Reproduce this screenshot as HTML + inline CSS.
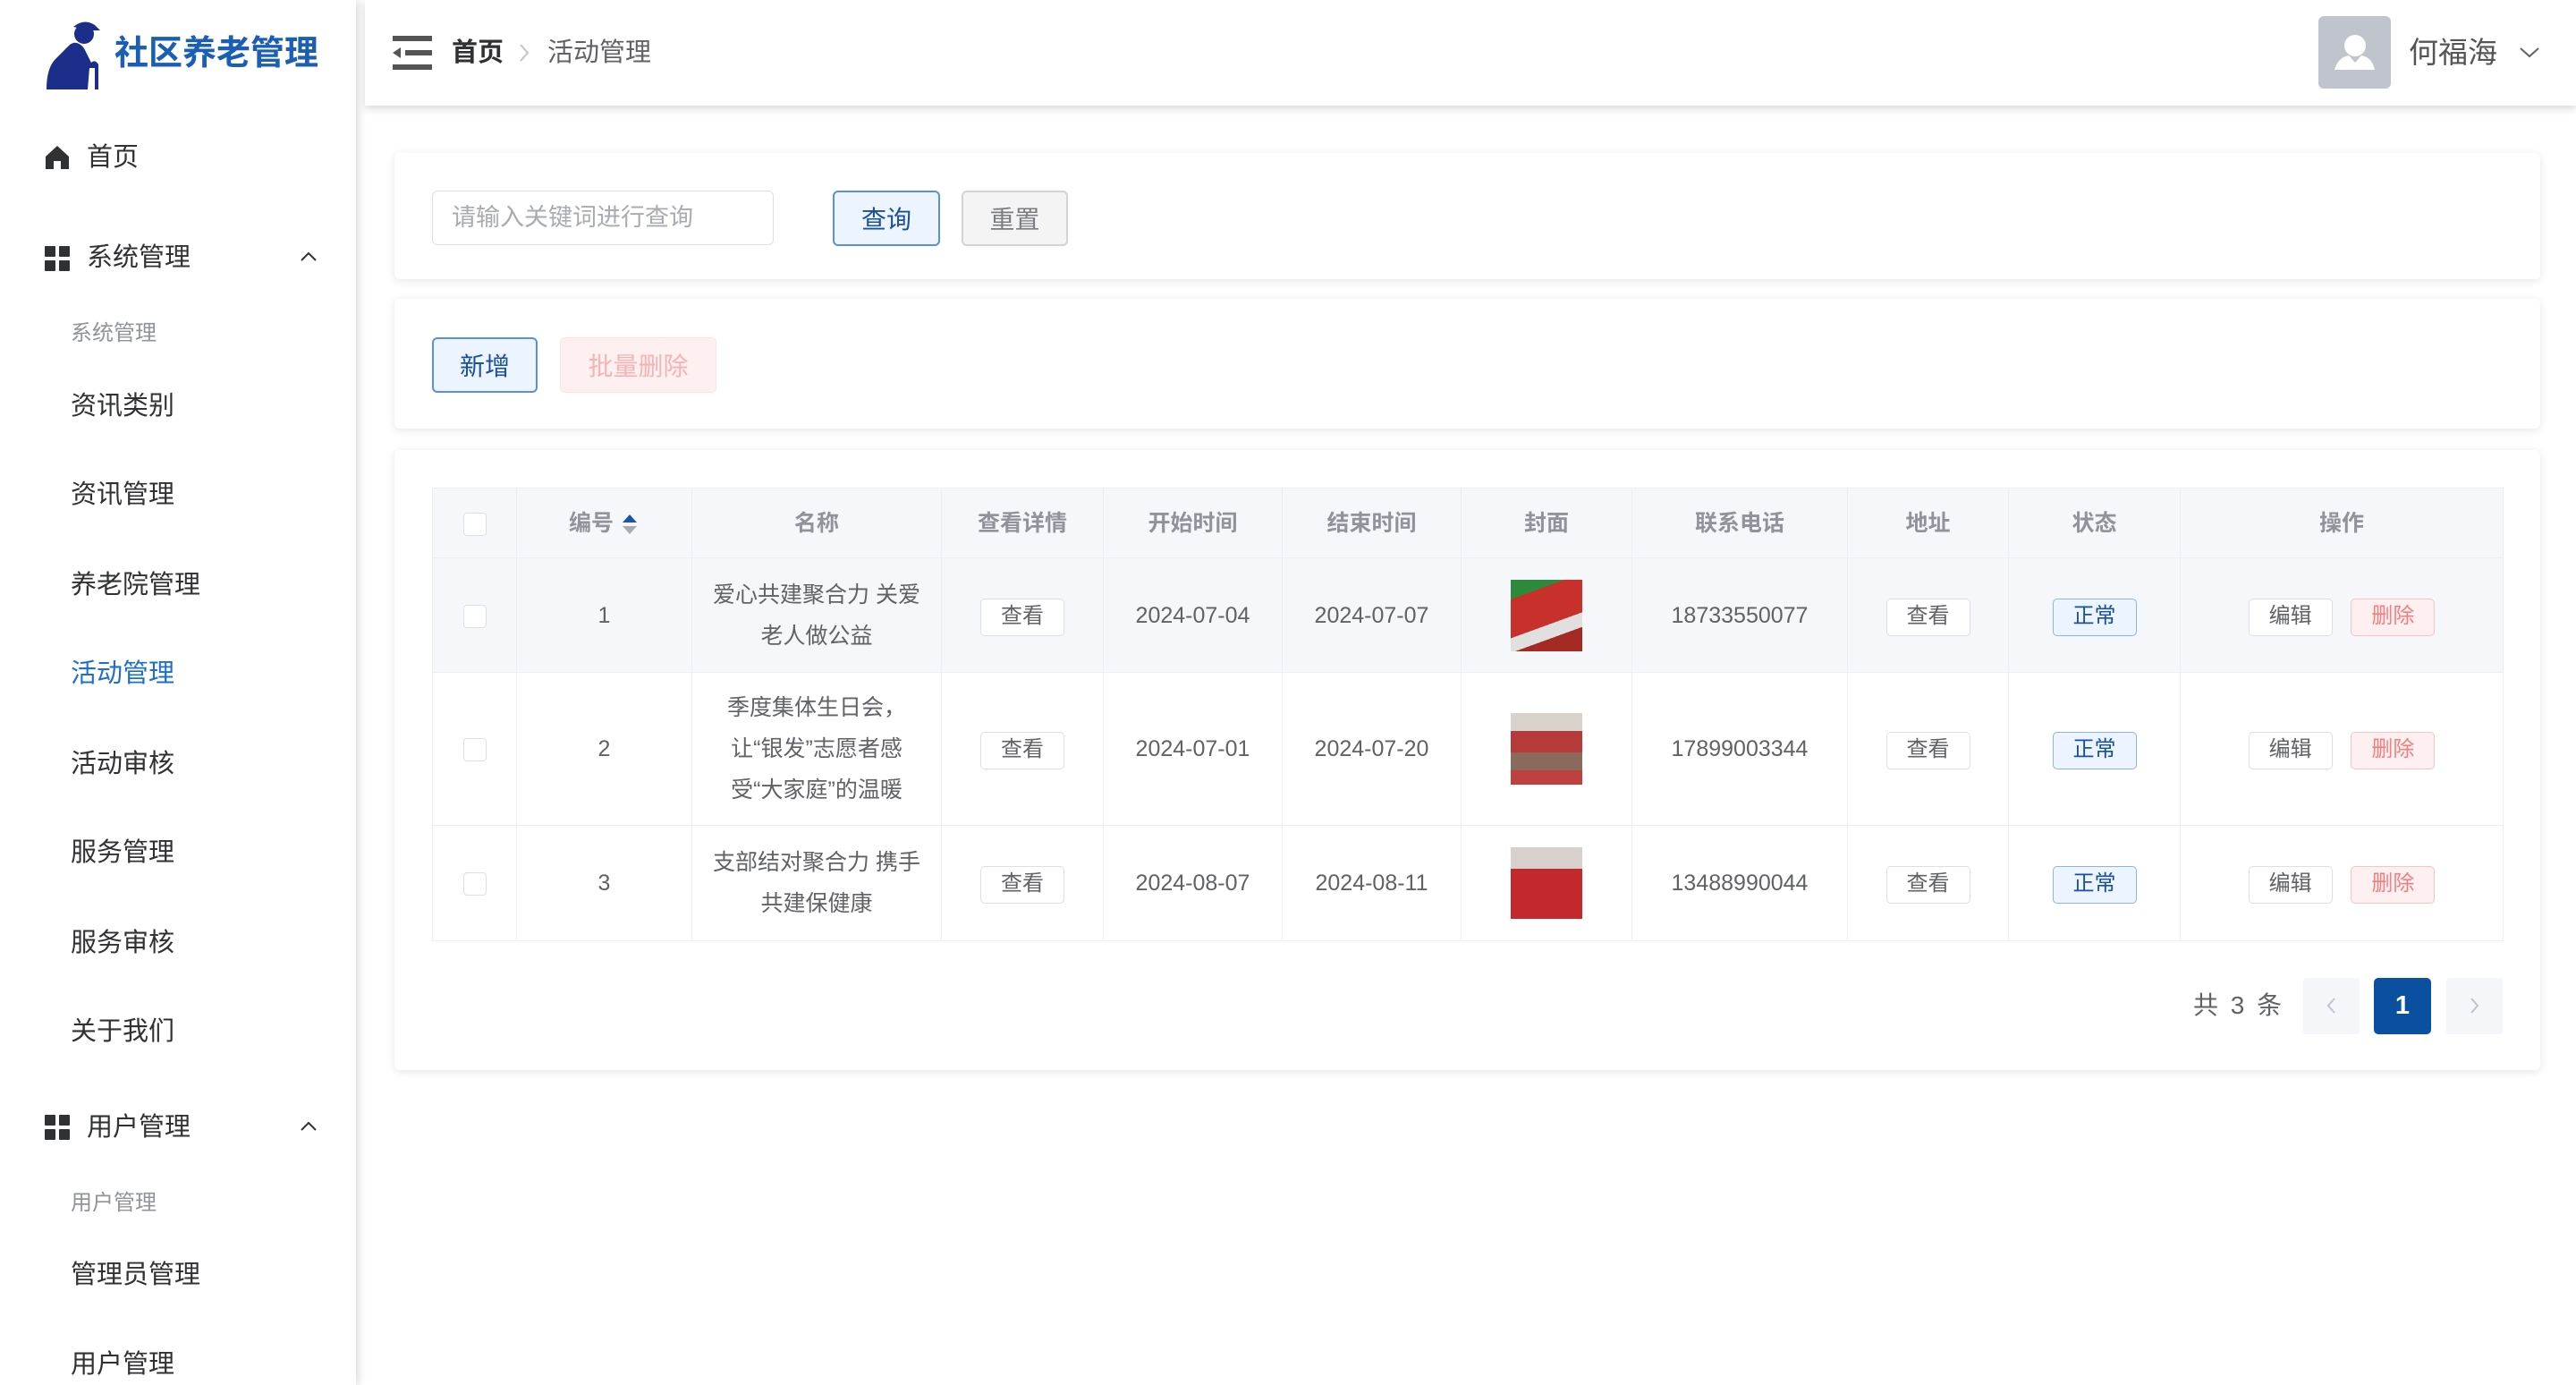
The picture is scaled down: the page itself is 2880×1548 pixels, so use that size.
<!DOCTYPE html>
<html><head><meta charset="utf-8"><style>
*{margin:0;padding:0;box-sizing:border-box}
body{width:2880px;height:1548px;overflow:hidden;background:#fff;font-family:"Liberation Sans","Noto Sans CJK SC",sans-serif;color:#333;position:relative}
.a{position:absolute}
.side{left:0;top:0;width:398px;height:1548px;background:#fff;box-shadow:4px 0 8px rgba(0,0,0,.12)}
.mi{position:absolute;left:79px;font-size:29px;color:#303133;line-height:40px}
.grp{position:absolute;left:97px;font-size:29px;color:#303133;line-height:40px}
.sub{position:absolute;left:79px;font-size:24px;color:#909399;line-height:30px}
.hdr{left:408px;top:0;width:2472px;height:118px;background:#fff;box-shadow:0 4px 8px rgba(0,0,0,.14)}
.card{position:absolute;left:441px;width:2399px;background:#fff;border-radius:6px;box-shadow:0 2px 10px rgba(0,0,0,.1)}
.btn{position:absolute;height:62px;border-radius:6px;font-size:28px;display:flex;align-items:center;justify-content:center}
table{position:absolute;left:483px;top:545px;border-collapse:collapse;font-size:25px;color:#606266}
td,th{border:1px solid #ebeef5;text-align:center;line-height:46px}
th{background:#f5f7fa;font-weight:bold;color:#909399;height:78px;font-size:25px}
.sb{display:inline-block;height:42px;line-height:38px;padding:0 22px;border:1px solid #dcdfe6;border-radius:5px;background:#fff;font-size:24px;color:#606266}
.cb{display:inline-block;width:26px;height:26px;border:1px solid #dcdfe6;border-radius:4px;background:#fff;vertical-align:middle}
.img{display:inline-block;width:80px;height:80px;vertical-align:middle}
</style></head><body>
<div class="a side">
<svg class="a" style="left:50px;top:20px" width="80" height="84" viewBox="0 0 80 84"><g fill="#1b2e8a"><circle cx="44" cy="18" r="11"/><path d="M32 10 Q44 0 56 8 L62 14 L50 14 Z"/><path d="M28 30 Q36 24 44 34 L52 50 Q56 46 60 52 L60 80 L56 80 L56 56 L50 56 L48 80 L2 80 Q2 56 12 46 Z"/></g></svg>
<div class="a" style="left:128px;top:36px;font-size:38px;font-weight:bold;color:#1a5fb4;line-height:48px">社区养老管理</div>
<svg class="a" style="left:50px;top:162px" width="28" height="28" viewBox="0 0 28 28"><path d="M14 1 L27 13 L27 27 L18 27 L18 18 L10 18 L10 27 L1 27 L1 13 Z" fill="#303133"/></svg>
<div class="grp" style="top:156px">首页</div>
<svg class="a" style="left:50px;top:275px" width="28" height="28"><g fill="#303133"><rect x="0" y="0" width="12" height="12" rx="1"/><rect x="16" y="0" width="12" height="12" rx="1"/><rect x="0" y="16" width="12" height="12" rx="1"/><rect x="16" y="16" width="12" height="12" rx="1"/></g></svg>
<div class="grp" style="top:268px">系统管理</div>
<svg class="a" style="left:335px;top:281px" width="20" height="12"><path d="M2 10 L10 2 L18 10" stroke="#303133" stroke-width="2" fill="none"/></svg>
<div class="sub" style="top:358px">系统管理</div>
<div class="mi" style="top:434px">资讯类别</div>
<div class="mi" style="top:533px">资讯管理</div>
<div class="mi" style="top:634px">养老院管理</div>
<div class="mi" style="top:733px;color:#1d6fc9">活动管理</div>
<div class="mi" style="top:834px">活动审核</div>
<div class="mi" style="top:933px">服务管理</div>
<div class="mi" style="top:1034px">服务审核</div>
<div class="mi" style="top:1133px">关于我们</div>
<svg class="a" style="left:50px;top:1246px" width="28" height="28"><g fill="#303133"><rect x="0" y="0" width="12" height="12" rx="1"/><rect x="16" y="0" width="12" height="12" rx="1"/><rect x="0" y="16" width="12" height="12" rx="1"/><rect x="16" y="16" width="12" height="12" rx="1"/></g></svg>
<div class="grp" style="top:1240px">用户管理</div>
<svg class="a" style="left:335px;top:1253px" width="20" height="12"><path d="M2 10 L10 2 L18 10" stroke="#303133" stroke-width="2" fill="none"/></svg>
<div class="sub" style="top:1330px">用户管理</div>
<div class="mi" style="top:1405px">管理员管理</div>
<div class="mi" style="top:1505px">用户管理</div>
</div>
<div class="a hdr">
<svg class="a" style="left:31px;top:40px" width="44" height="38"><g fill="#555"><rect x="0" y="0" width="44" height="6"/><rect x="14" y="16" width="30" height="6"/><rect x="0" y="32" width="44" height="6"/><path d="M0 19 L9 13 L9 25 Z"/></g></svg>
<div class="a" style="left:97px;top:39px;font-size:29px;font-weight:bold;color:#303133;line-height:40px">首页</div>
<svg class="a" style="left:172px;top:48px" width="12" height="22"><path d="M2 2 L10 11 L2 20" stroke="#c0c4cc" stroke-width="2" fill="none"/></svg>
<div class="a" style="left:204px;top:39px;font-size:29px;color:#606266;line-height:40px">活动管理</div>
<div class="a" style="left:2184px;top:18px;width:81px;height:81px;border-radius:6px;background:#c0c4cc;overflow:hidden"><svg width="81" height="81"><circle cx="41" cy="33" r="12" fill="#fff"/><path d="M18 60 Q22 46 34 44 L41 52 L48 44 Q60 46 63 60 Z" fill="#fff"/></svg></div>
<div class="a" style="left:2285px;top:38px;font-size:33px;color:#555;line-height:42px">何福海</div>
<svg class="a" style="left:2408px;top:52px" width="24" height="14"><path d="M2 2 L12 11 L22 2" stroke="#606266" stroke-width="2" fill="none"/></svg>
</div>
<div class="card" style="top:171px;height:141px"></div>
<div class="a" style="left:483px;top:213px;width:382px;height:61px;border:1px solid #dcdfe6;border-radius:6px;font-size:27px;color:#a8abb2;line-height:59px;padding-left:21px">请输入关键词进行查询</div>
<div class="btn" style="left:931px;top:213px;width:120px;background:#ecf5ff;border:2px solid #5d8fd6;color:#1a4f9c">查询</div>
<div class="btn" style="left:1075px;top:213px;width:119px;background:#f4f4f5;border:2px solid #d3d4d6;color:#7a7c80">重置</div>
<div class="card" style="top:334px;height:145px"></div>
<div class="btn" style="left:483px;top:377px;width:118px;background:#ecf5ff;border:2px solid #5d8fd6;color:#1a4f9c">新增</div>
<div class="btn" style="left:626px;top:377px;width:175px;background:#fef0f0;border:1px solid #fde2e2;color:#f5b3b3">批量删除</div>
<div class="card" style="top:503px;height:693px"></div>
<table>
<tr><th style="width:94px"><span class="cb"></span></th><th style="width:196px">编号 <svg width="22" height="26" style="vertical-align:middle"><path d="M11 2 L19 11 L3 11Z" fill="#1a55a8"/><path d="M11 24 L19 15 L3 15Z" fill="#a8abb2"/></svg></th><th style="width:279px">名称</th><th style="width:181px">查看详情</th><th style="width:200px">开始时间</th><th style="width:200px">结束时间</th><th style="width:191px">封面</th><th style="width:241px">联系电话</th><th style="width:180px">地址</th><th style="width:192px">状态</th><th style="width:361px">操作</th></tr>
<tr style="height:128px;background:#f5f7fa"><td><span class="cb"></span></td><td>1</td><td>爱心共建聚合力 关爱<br>老人做公益</td><td><span class="sb">查看</span></td><td>2024-07-04</td><td>2024-07-07</td><td><span class="img" style="background:linear-gradient(160deg,#2d8a3c 0 20%,#c8302c 20% 60%,#e0e0e0 60% 75%,#a52a24 75%)"></span></td><td>18733550077</td><td><span class="sb">查看</span></td><td><span class="sb" style="background:#ecf5ff;border-color:#8db3e6;color:#1a4f9c">正常</span></td><td><span class="sb">编辑</span>&nbsp;&nbsp;&nbsp;<span class="sb" style="background:#fef0f0;border-color:#f8c4c4;color:#f08080">删除</span></td></tr>
<tr style="height:171px"><td><span class="cb"></span></td><td>2</td><td>季度集体生日会，<br>让“银发”志愿者感<br>受“大家庭”的温暖</td><td><span class="sb">查看</span></td><td>2024-07-01</td><td>2024-07-20</td><td><span class="img" style="background:linear-gradient(180deg,#d9d3cc 0 25%,#b73a3a 25% 55%,#8a6a5c 55% 80%,#c04040 80%)"></span></td><td>17899003344</td><td><span class="sb">查看</span></td><td><span class="sb" style="background:#ecf5ff;border-color:#8db3e6;color:#1a4f9c">正常</span></td><td><span class="sb">编辑</span>&nbsp;&nbsp;&nbsp;<span class="sb" style="background:#fef0f0;border-color:#f8c4c4;color:#f08080">删除</span></td></tr>
<tr style="height:129px"><td><span class="cb"></span></td><td>3</td><td>支部结对聚合力 携手<br>共建保健康</td><td><span class="sb">查看</span></td><td>2024-08-07</td><td>2024-08-11</td><td><span class="img" style="background:linear-gradient(180deg,#d8d0cc 0 30%,#c2282c 30% 100%)"></span></td><td>13488990044</td><td><span class="sb">查看</span></td><td><span class="sb" style="background:#ecf5ff;border-color:#8db3e6;color:#1a4f9c">正常</span></td><td><span class="sb">编辑</span>&nbsp;&nbsp;&nbsp;<span class="sb" style="background:#fef0f0;border-color:#f8c4c4;color:#f08080">删除</span></td></tr>
</table>
<div class="a" style="left:2452px;top:1104px;font-size:28px;color:#606266;line-height:40px;letter-spacing:3px">共 3 条</div>
<div class="a" style="left:2575px;top:1093px;width:63px;height:63px;background:#f4f6f9;border-radius:4px"><svg width="63" height="63"><path d="M35 23 L28 31 L35 39" stroke="#c0c4cc" stroke-width="2" fill="none"/></svg></div>
<div class="a" style="left:2654px;top:1093px;width:64px;height:63px;background:#0b4fa0;border-radius:5px;color:#fff;font-weight:bold;font-size:29px;text-align:center;line-height:63px">1</div>
<div class="a" style="left:2735px;top:1093px;width:63px;height:63px;background:#f4f6f9;border-radius:4px"><svg width="63" height="63"><path d="M28 23 L35 31 L28 39" stroke="#c0c4cc" stroke-width="2" fill="none"/></svg></div>
</body></html>
